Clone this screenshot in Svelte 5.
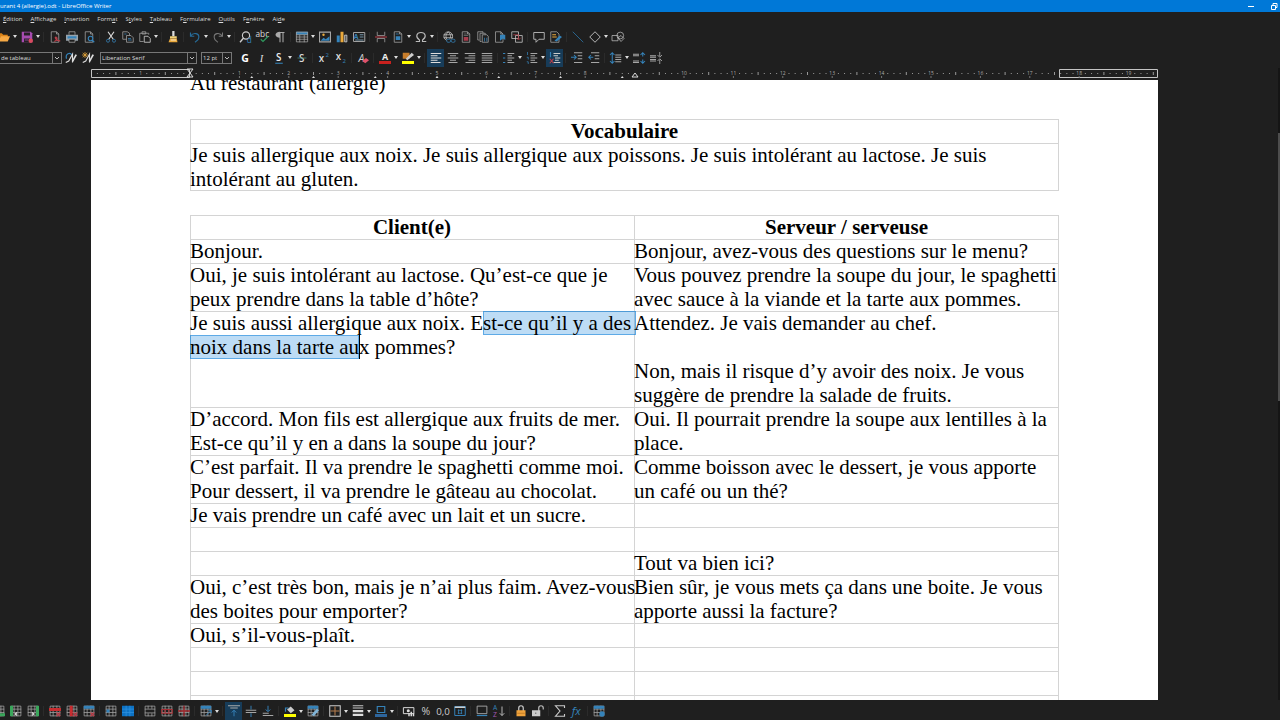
<script lang="ts">
	const menus = [
		['É', 'dition'],
		['A', 'ffichage'],
		['I', 'nsertion'],
		['Forma', 't'],
		['St', 'yles'],
		['T', 'ableau'],
		['Fo', 'rmulaire'],
		['O', 'utils'],
		['Fe', 'nêtre'],
		['Aid', 'e']
	];

	const G = '#a6a6a6';
	const B = '#3583ba';
	const R = '#b93f4a';
	const Y = '#e9a93c';

	const page = `<path d="M3 1h7l3 3v11H3z M10 1v3h3" stroke="${G}"/>`;
	const grid = (h = 15) =>
		`<path d="M1.5 1.5h13v13h-13z M1 5.5h14 M1 10h14 M5.5 1v${h - 1} M10.5 1v${h - 1}" stroke="${G}"/>`;
	const lines = (rows: number[][], c = G) =>
		`<path d="${rows.map(([x, y, w]) => `M${x} ${y}h${w}`).join('')}" stroke="${c}" stroke-width="1.4"/>`;
	const cross = `<path d="M10 10l5 5m0-5l-5 5" stroke="${R}" stroke-width="1.8"/>`;

	const icons: Record<string, string> = {
		Ouvrir: `<path d="M0 3h5l2 2h6v3H4l-3 6H0z" fill="#d98218"/><path d="M4 7h12l-3 7H0z" fill="#f6a945"/>`,
		Enregistrer: `<path d="M1 1h12l2 2v12H1z" fill="#a64bb0"/><path d="M4 2h8v4H4z M4 10h8v5H4z" fill="#262026"/><path d="M5 12h5" stroke="#a64bb0"/><circle cx="13" cy="13" r="3" fill="#d94b60"/>`,
		'Exporter en PDF': page + `<path d="M7 14c5-2 4-6 2-6s1 6 6 5" stroke="${R}" stroke-width="1.6"/>`,
		Imprimer: `<path d="M4 5V1h8v4" stroke="${G}"/><path d="M0 5h16v8H0z" fill="#98a4ac"/><path d="M2 7h12v3H2z" fill="${B}"/><path d="M4 11h8v4H4z" fill="#1f1f1f" stroke="${G}"/>`,
		'Aperçu': page + `<circle cx="10" cy="10" r="3" fill="#1f1f1f" stroke="${B}" stroke-width="1.5"/><path d="M12 12l3 3" stroke="${B}" stroke-width="1.6"/>`,
		Couper: `<path d="M4 1l7 10M12 1L5 11" stroke="#ddd" stroke-width="1.5"/><circle cx="4" cy="13" r="2" stroke="${B}"/><circle cx="12" cy="13" r="2" stroke="${B}"/>`,
		Copier: `<path d="M1 1h6l3 2v8H1z" stroke="${G}"/><path d="M6 6h6l3 3v6H6z" fill="#1f1f1f" stroke="${G}"/><path d="M8 10h4M8 12h5M3 4h3" stroke="${B}"/>`,
		Coller: `<path d="M6 14H1V3h12v2M4 3V1h5v3H4z" stroke="${G}"/><path d="M7 7h5l3 3v5H7z" fill="#1f1f1f" stroke="#ddd"/>`,
		'Cloner le formatage': `<path d="M7 0h3v7H7z" fill="#ddd"/><path d="M4 7h9v3H4z" fill="#f1d27a"/><path d="M4 10h9l1 5H2z" fill="${Y}"/><path d="M5 12h7" stroke="#fff"/>`,
		Annuler: `<path d="M2 2v5h5M2 7c4-6 12-4 11 2 0 3-2 4-5 6" stroke="#276b98" stroke-width="1.6"/>`,
		'Rétablir': `<path d="M14 2v5H9M14 7C10 1 2 3 3 9c0 3 2 4 5 6" stroke="#777" stroke-width="1.4"/>`,
		Rechercher: `<circle cx="8" cy="6" r="4.8" stroke="#ccc" stroke-width="1.5"/><path d="M5 9l-5 6" stroke="#ccc" stroke-width="1.8"/><text x="9" y="16" font-size="11" fill="${B}">d</text>`,
		Orthographe: `<text x="-2" y="8" font-size="11" fill="#ddd">abc</text><path d="M5 11l3 3 7-7" stroke="#2f9a5f" stroke-width="1.6"/>`,
		'Marques de formatage': `<path d="M7 2h7M8 2v13M12 2v13" stroke="#aaa" stroke-width="1.4"/><path d="M8 1C0 1 0 9 8 9z" fill="#aaa"/>`,
		'Insérer un tableau': `<path d="M0 1h16v4H0z" fill="${B}"/><path d="M.5 1.5h15v13H.5z M0 5h16M0 8h16M0 11h16M5 5v10M11 5v10" stroke="${G}"/>`,
		'Insérer une image': `<path d="M.7 1.5h14.6v13H.7z" stroke="${G}" stroke-width="1.4"/><path d="M2 13l4-4 3 2 5-4v6z" fill="${B}"/><circle cx="6" cy="5" r="1.6" fill="${Y}"/>`,
		Diagramme: `<path d="M1 6h4v9H1z" fill="${B}"/><path d="M6 1h4v14H6z" fill="${Y}"/><path d="M11.5 5.5h3v9h-3z" stroke="#ddd" fill="#555"/>`,
		'Zone de texte': `<path d="M.7 2h15v12H.7z" stroke="${G}" stroke-width="1.3"/><text x="1" y="11" font-size="9" font-weight="700" fill="${B}">A</text><path d="M9 5h5M9 8h5M3 12h11" stroke="#8db9d6"/>`,
		'Saut de page': `<path d="M3 1v5h10V1M3 15v-5h10v5" stroke="${G}"/><path d="M0 8h16" stroke="${R}" stroke-width="1.4"/>`,
		Champ: page + `<path d="M5 7h6v5H5z" fill="${B}"/><path d="M5 4h4" stroke="${B}"/>`,
		'Caractères spéciaux': `<path d="M1 14h5v-2C0 8 2 2 8 2s8 6 2 10v2h5" stroke="#bbb" stroke-width="1.5"/>`,
		'Hyperlien': `<circle cx="7" cy="7" r="5.8" stroke="#ccc"/><path d="M1 5h12M1 9h12M7 1c-5 5-3 9 0 12M7 1c5 5 3 9 0 12" stroke="#ccc"/><path d="M5 13h9" stroke="#1f1f1f" stroke-width="5"/><rect x="5" y="11" width="5" height="4" rx="1.5" stroke="${B}"/><rect x="11" y="11" width="5" height="4" rx="1.5" stroke="${B}"/>`,
		'Note de bas de page': page + `<path d="M5 8h6v5H5z" fill="#a83d4d"/><path d="M5 4h4M5 6h6" stroke="#777"/>`,
		'Note de fin': `<path d="M3 12H1V1h7v2M6 14H4V3h7v2" stroke="${G}"/><path d="M7 5h6l2 2v8H7z" fill="#1f1f1f" stroke="${G}"/><path d="M10 9v5M13 9v5" stroke="${B}"/>`,
		'Repère de texte': `<path d="M2 1h7l3 3v11H2z M9 1v3h3" stroke="${G}"/><path d="M8 5h7v7l-3-2-4 3z" fill="${B}"/>`,
		'Renvoi': `<path d="M1 1h9v9H1z M6 6h9v9H6z" stroke="#ccc"/><path d="M3 5h7v6M7 9l3 3 3-3" stroke="${R}"/>`,
		Commentaire: `<path d="M1 2h14v9H8l-4 4v-4H1z" stroke="#bbb" stroke-width="1.2"/>`,
		'Suivi des modifications': `<path d="M1 1h8l3 3v11H1z" stroke="${G}"/><path d="M3 5h5M3 8h6" stroke="${Y}" stroke-width="1.5"/><path d="M6 13l7-7 3 2-7 6z" fill="${B}"/>`,
		Ligne: `<path d="M1 1l14 14" stroke="#2a668f" stroke-width="1.3"/>`,
		Formes: `<path d="M8 1l7 7-7 7-7-7z" stroke="#bbb" stroke-width="1.3"/>`,
		'Fonctions de dessin': `<circle cx="11" cy="6" r="4.5" stroke="#bbb"/><path d="M0 6h8v7H0z M8 9l4 5 4-4-4-4z" stroke="#bbb"/>`,

		'Actualiser le style': `<path d="M2 9C0 2 7 0 9 4" stroke="${B}" stroke-width="1.6"/><path d="M1 14l4-2 5-9v11" stroke="#ddd" stroke-width="1.5"/><path d="M9 12l5-9 2 1-5 9z" fill="#ddd"/>`,
		'Nouveau style': `<path d="M4 0v8M0 4h8M1 1l6 6M7 1L1 7" stroke="${Y}"/><path d="M1 14l4-2 5-9v11" stroke="#ddd" stroke-width="1.5"/><path d="M9 12l5-9 2 1-5 9z" fill="#ddd"/>`,
		Gras: `<text x="3" y="13" font-size="14" font-weight="700" fill="#fff">G</text>`,
		Italique: `<text x="5" y="13" font-size="14" font-style="italic" font-family="Liberation Serif, serif" fill="#ddd">I</text>`,
		Souligner: `<text x="4" y="12" font-size="13" font-weight="600" fill="#eee">S</text><path d="M3 15h10" stroke="${B}" stroke-width="1.4"/>`,
		Barrer: `<text x="4" y="13" font-size="13" font-weight="600" fill="#ddd">S</text><path d="M2 8h12" stroke="#43806f" stroke-width="1.2"/>`,
		Exposant: `<text x="1" y="13" font-size="13" font-weight="600" fill="#ddd">x</text><text x="10" y="7" font-size="8" fill="${B}">2</text>`,
		Indice: `<text x="1" y="11" font-size="13" font-weight="600" fill="#ddd">x</text><text x="10" y="15" font-size="8" fill="${B}">2</text>`,
		'Effacer le formatage': `<text x="2" y="13" font-size="14" font-style="italic" fill="#ccc">A</text><path d="M7 12l5-4 4 3-5 4z" fill="#e0526a"/>`,
		'Couleur de police': `<text x="4" y="10" font-size="12" font-weight="700" fill="#eee">A</text><path d="M0 12h16v4H0z" fill="#c9211e"/>`,
		Surlignage: `<path d="M1 1h9v8H1z" fill="#c77d2b"/><path d="M5 9l8-8 3 3-9 7z" fill="#ccc"/><path d="M0 12h16v4H0z" fill="#ffff00"/>`,
		'Aligner à gauche': lines([[1, 2, 14], [1, 5, 9], [1, 8, 14], [1, 11, 9], [1, 14, 13]], '#ddd'),
		Centrer: lines([[1, 2, 14], [4, 5, 8], [1, 8, 14], [4, 11, 8], [2, 14, 12]]),
		'Aligner à droite': lines([[1, 2, 14], [6, 5, 9], [1, 8, 14], [6, 11, 9], [2, 14, 13]]),
		Justifier: lines([[1, 2, 14], [1, 5, 14], [1, 8, 14], [1, 11, 14], [1, 14, 14]]),
		Puces: lines([[6, 2, 9], [6, 5, 6], [6, 8, 9], [6, 11, 6], [6, 14, 9]]) + lines([[0, 2, 3], [0, 8, 3], [0, 14, 3]], B),
		'Numérotation': lines([[6, 2, 9], [6, 5, 6], [6, 8, 9], [6, 11, 6], [6, 14, 9]]) + `<path d="M2 0v4M1 7h2v3M1 13h2v3" stroke="${B}"/>`,
		Plan: lines([[6, 2, 9], [6, 5, 6], [8, 8, 7], [8, 11, 5], [6, 14, 9]], '#ccc') + `<path d="M2 0v7" stroke="${B}" stroke-width="1.5"/><path d="M1 9l5 6m0-6l-5 6" stroke="${R}" stroke-width="1.5"/>`,
		'Augmenter le retrait': lines([[4, 1, 11], [9, 5, 6], [9, 9, 6], [4, 14, 11]]) + `<path d="M0 7h6M4 4l3 3-3 3" stroke="${B}" stroke-width="1.4"/>`,
		'Diminuer le retrait': lines([[4, 1, 11], [9, 5, 6], [9, 9, 6], [4, 14, 11]]) + `<path d="M1 7h6M4 4L1 7l3 3" stroke="${B}" stroke-width="1.4"/>`,
		Interligne: lines([[7, 4, 8], [7, 7, 8], [7, 10, 8], [7, 13, 8]]) + `<path d="M3 1v14M0 4l3-3 3 3M0 12l3 3 3-3" stroke="${B}" stroke-width="1.4"/>`,
		"Augmenter l'espacement": lines([[0, 3, 8], [0, 5, 8], [0, 12, 8], [0, 14, 8]]) + `<path d="M13 1v5M13 10v5M10 4l3-3 3 3M10 12l3 3 3-3" stroke="${B}" stroke-width="1.4"/>`,
		"Diminuer l'espacement": lines([[0, 5, 8], [0, 7, 8], [0, 10, 8], [0, 12, 8]]) + `<path d="M13 0v6M13 10v6M10 4l3 3 3-3M10 12l3-3 3 3" stroke="${G}" stroke-width="1.2"/>`,

		'Lignes au-dessous': grid() + `<path d="M0 11h16v4H0z" fill="#3aa65b"/>`,
		'Colonnes avant': grid() + `<path d="M0 1h4v14H0z" fill="#3aa65b"/><path d="M6 12l3-3v6z" fill="#eee"/>`,
		'Colonnes après': grid() + `<path d="M12 1h4v14h-4z" fill="#3aa65b"/><path d="M10 12l-3-3v6z" fill="#eee"/>`,
		'Supprimer les lignes': grid() + `<path d="M0 4h16v4H0z" fill="#c92d30"/>` + cross,
		'Supprimer les colonnes': grid() + `<path d="M5 1h4v14H5z" fill="#c92d30"/>` + cross,
		'Supprimer le tableau': grid() + `<path d="M1 1h14v4H1z" fill="${B}"/>` + cross,
		'Sélectionner la cellule': grid() + `<path d="M2 6h4v4H2z" fill="${B}"/>`,
		'Sélectionner le tableau': `<path d="M0 1h16v14H0z" fill="#0d72c4"/><path d="M5.5 1v14M10.5 1v14M0 5.5h16M0 10h16" stroke="#2d91df"/>`,
		Fusionner: `<path d="M1.5 1.5h13v13h-13z M1 5.5h14M1 10.5h14M5.5 1v4M10.5 1v4M5.5 11v4M10.5 11v4" stroke="${G}"/>`,
		Fractionner: grid() + `<path d="M1 6h14v5H1z M5.5 6v5M10.5 6v5" stroke="#a92f35" stroke-width="1.4"/>`,
		'Fractionner le tableau': grid() + `<path d="M0 8h16M8 1v14" stroke="#a92f35" stroke-width="1.8"/>`,
		'Optimiser la taille': grid() + `<path d="M1 1h14v4H1z" fill="${B}"/><path d="M8 14l7-7M15 11v-4h-4" stroke="${B}" stroke-width="1.3"/>`,
		'Aligner en haut': lines([[0, 1, 16], [3, 4, 10]], '#aaa') + `<path d="M8 15V7M5 10l3-3 3 3" stroke="${B}" stroke-width="1.3"/>`,
		'Centrer verticalement': lines([[1, 7, 14], [1, 10, 14]]) + `<path d="M8 1v5M8 16v-5" stroke="${B}" stroke-width="1.3"/>`,
		'Aligner en bas': lines([[1, 11, 8], [1, 14, 14]]) + `<path d="M8 1v7M5 6l3 3 3-3" stroke="${B}" stroke-width="1.3"/>`,
		'Arrière-plan': `<path d="M4 6l5-4 5 5-5 4z" fill="#ccc"/><path d="M2 9V4h4" stroke="${B}" stroke-width="1.6"/><path d="M0 12h16v4H0z" fill="#ffff00"/>`,
		AutoFormat: grid() + `<path d="M1 1h14v4H1z" fill="${B}"/><path d="M6 13l7-8 3 2-7 8z" fill="#7fb4d8"/>`,
		Bordures: `<path d="M1 1h14v14H1z" stroke="#ccc" stroke-width="1.4"/><path d="M8 2v12M2 8h12" stroke="#b37c4c" stroke-width="1.4"/>`,
		'Style de bordure': `<path d="M1 1h14M1 4h14" stroke="#ccc" stroke-width="1.3"/><path d="M1 8h14M1 13h14" stroke="#ddd" stroke-width="3"/>`,
		'Couleur de bordure': `<path d="M3 2h10v8H3z" stroke="${B}" stroke-width="1.5"/><path d="M0 12h16v4H0z" fill="#2d659c"/>`,
		'Monétaire': `<path d="M.5 3.5h14v8H.5z" stroke="#ddd" stroke-width="1.3"/><circle cx="7" cy="7.5" r="2" fill="#ddd"/><path d="M8 11v4M11 9v6M14 11v4" stroke="#ddd" stroke-width="2"/>`,
		Pourcentage: `<text x="2" y="13" font-size="14" fill="#ccc">%</text>`,
		'Décimal': `<text x="-1" y="13" font-size="13" fill="#ccc">0,0</text>`,
		Date: `<path d="M1 2h14v12H1z" stroke="${B}" stroke-width="1.3"/><path d="M1 3h14" stroke="#ccc" stroke-width="2"/><path d="M5 7h6M5 11h6M6 6v6M10 6v6" stroke="${B}"/>`,
		'Légende': `<path d="M1.5 1.5h13v10h-13z" stroke="#aaa" stroke-width="1.2"/><path d="M1 14h14" stroke="${B}" stroke-width="1.6"/>`,
		Trier: `<text x="0" y="7" font-size="9" fill="${B}">A</text><text x="0" y="16" font-size="9" fill="#a359b5">Z</text><path d="M12 2v12M9 11l3 3 3-3" stroke="#bbb" stroke-width="1.3"/>`,
		'Protéger': `<path d="M5 8V4c0-4 6-4 6 0v4" stroke="#ccc" stroke-width="1.6"/><path d="M2 7h12v8H2z" fill="#f0a33b"/><path d="M3 11h10" stroke="#b97422"/>`,
		'Déprotéger': `<path d="M9 8V4c0-4 6-4 6 0v2" stroke="#bbb" stroke-width="1.6"/><path d="M0 7h11v8H0z" fill="#ccc"/><path d="M5 10v2" stroke="#444"/>`,
		Somme: `<path d="M14 4V1H2l6 7-6 7h12v-3" stroke="#ccc" stroke-width="1.5"/>`,
		Formule: `<text x="1" y="13" font-size="15" font-style="italic" fill="${B}">fx</text>`,
		'Propriétés du tableau': grid() + `<path d="M1 1h14v4H1z" fill="${B}"/><circle cx="12" cy="12" r="3.6" fill="${B}"/>`
	};

	const standard =
		'Ouvrir v Enregistrer v | Exporter_en_PDF Imprimer Aperçu | Couper Copier Coller v | Cloner_le_formatage | Annuler v Rétablir v | Rechercher Orthographe Marques_de_formatage | Insérer_un_tableau v Insérer_une_image Diagramme Zone_de_texte | Saut_de_page Champ v Caractères_spéciaux v | Hyperlien Note_de_bas_de_page Note_de_fin Repère_de_texte Renvoi | Commentaire Suivi_des_modifications | Ligne Formes v Fonctions_de_dessin';
	const styleTools = 'Actualiser_le_style Nouveau_style';
	const formatting =
		"Gras Italique Souligner v Barrer | Exposant Indice | Effacer_le_formatage | Couleur_de_police v Surlignage v | Aligner_à_gauche Centrer Aligner_à_droite Justifier | Puces v Numérotation v Plan | Augmenter_le_retrait Diminuer_le_retrait | Interligne v Augmenter_l'espacement Diminuer_l'espacement";
	const tableTools =
		'Lignes_au-dessous Colonnes_avant Colonnes_après | Supprimer_les_lignes Supprimer_les_colonnes Supprimer_le_tableau | Sélectionner_la_cellule Sélectionner_le_tableau | Fusionner Fractionner Fractionner_le_tableau | Optimiser_la_taille v | Aligner_en_haut Centrer_verticalement Aligner_en_bas | Arrière-plan v AutoFormat | Bordures v Style_de_bordure v Couleur_de_bordure v | Monétaire Pourcentage Décimal Date | Légende Trier | Protéger Déprotéger | Somme Formule | Propriétés_du_tableau';

	const active = ['Aligner à gauche', 'Plan', 'Aligner en haut'];

	// one entry per table row, each cell is a list of lines
	const dialogue = [
		[['Bonjour.'], ['Bonjour, avez-vous des questions sur le menu?']],
		[
			['Oui, je suis intolérant au lactose. Qu’est-ce que je', 'peux prendre dans la table d’hôte?'],
			['Vous pouvez prendre la soupe du jour, le spaghetti', 'avec sauce à la viande et la tarte aux pommes.']
		],
		[
			['Je suis aussi allergique aux noix. E[st-ce qu’il y a des ]', '[noix dans la tarte au]x pommes?'],
			['Attendez. Je vais demander au chef.', '', 'Non, mais il risque d’y avoir des noix. Je vous', 'suggère de prendre la salade de fruits.']
		],
		[
			['D’accord. Mon fils est allergique aux fruits de mer.', 'Est-ce qu’il y en a dans la soupe du jour?'],
			['Oui. Il pourrait prendre la soupe aux lentilles à la', 'place.']
		],
		[
			['C’est parfait. Il va prendre le spaghetti comme moi.', 'Pour dessert, il va prendre le gâteau au chocolat.'],
			['Comme boisson avec le dessert, je vous apporte', 'un café ou un thé?']
		],
		[['Je vais prendre un café avec un lait et un sucre.'], ['']],
		[[''], ['']],
		[[''], ['Tout va bien ici?']],
		[
			['Oui, c’est très bon, mais je n’ai plus faim. Avez-vous', 'des boites pour emporter?'],
			['Bien sûr, je vous mets ça dans une boite. Je vous', 'apporte aussi la facture?']
		],
		[['Oui, s’il-vous-plaît.'], ['']],
		[[''], ['']],
		[[''], ['']],
		[[''], ['']]
	];

	const CM = 49.4;
	const dots = Array.from({ length: 173 }, (_, i) => i - 15)
		.map((i) => ({ i, x: 99 + (i * CM) / 8 }))
		.filter((d) => d.i % 8 !== 0 && d.x < 1064);
	const numbers = Array.from({ length: 20 }, (_, i) => i).filter((n) => n > 0);
	const tabs = Array.from({ length: 7 }, (_, i) => 99 + (i + 1) * CM * 1.25);
</script>

{#snippet tools(list: string)}
	{#each list.split(' ') as item}
		{@const name = item.replaceAll('_', ' ')}
		{#if item === '|'}
			<span class="sep"></span>
		{:else if item === 'v'}
			<button class="more" aria-label="Options">
				<svg viewBox="0 0 4 3"><path d="M0 0h4L2 3z" fill="#ddd" /></svg>
			</button>
		{:else}
			<button class="tool" class:active={active.includes(name)} aria-label={name}>
				<svg viewBox="0 0 16 16" fill="none">{@html icons[name]}</svg>
			</button>
		{/if}
	{/each}
{/snippet}

{#snippet combo(label: string, value: string, kind: string)}
	<label class="combo {kind}">
		<select aria-label={label}><option>{value}</option></select>
		<svg viewBox="0 0 10 12" fill="none"><path d="M.5 0v12" stroke="#777" /><path d="M3 5l2 2 2-2" stroke="#bbb" /></svg>
	</label>
{/snippet}

{#snippet line(text: string)}
	<p>
		{#each text.split(/(\[.*\])/) as part}{#if part.startsWith('[')}<mark class:caret={!part.endsWith(' ]')}>{part.slice(1, -1)}</mark>{:else}{part}{/if}{/each}
	</p>
{/snippet}

<div class="window">
	<header class="title">
		<span>urant 4 (allergie).odt - LibreOffice Writer</span>
		<div class="controls">
			<button aria-label="Réduire"><svg viewBox="0 0 8 8" fill="none"><path d="M1 4.5h6" stroke="#fff" /></svg></button>
			<button aria-label="Restaurer"><svg viewBox="0 0 8 8" fill="none"><path d="M1.5 3.5h4v4h-4z M3 3V1.5h4v4H6" stroke="#fff" /></svg></button>
		</div>
	</header>

	<nav class="menu">
		{#each menus as [a, b]}
			<button>{#if a.length > 1}{a.slice(0, -1)}{/if}<u>{a.at(-1)}</u>{b}</button>
		{/each}
	</nav>

	<div class="toolbar">{@render tools(standard)}</div>
	<div class="toolbar">
		{@render combo('Style de paragraphe', 'de tableau', 'style')}
		{@render tools(styleTools)}
		{@render combo('Police', 'Liberation Serif', 'font')}
		{@render combo('Taille', '12 pt', 'size')}
		{@render tools(formatting)}
	</div>

	<div class="workspace">
		<div class="editor">
			<svg class="ruler" viewBox="0 0 1067 12" fill="none">
				<path d="M.5 1.5h98v8H.5z M968.5 1.5h98v8h-98z" stroke="#c4c4c4" />
				{#each dots as d}
					<rect x={d.x - 0.5} y={d.i % 4 === 0 ? 4 : 5} width="1" height={d.i % 4 === 0 ? 3 : 1} fill="#999" />
				{/each}
				<text x={99 - CM} y="7">1</text>
				{#each numbers as n}
					{#if n !== 9}
						<text x={99 + n * CM} y="7">{n}</text>
						<path d="M{99 + n * CM} 8v2" stroke="#777" />
					{/if}
				{/each}
				{#each tabs as x}
					<path d="M{x - 1.5} 10h3l-1.5-2z" fill="#ddd" />
				{/each}
				<path d="M96 1h6l-6 8h6l-6-8M541 9l3-4 3 4z" stroke="#ddd" />
			</svg>

			<main class="page">
				<article>
					<p>Au restaurant (allergie)</p>
					<table>
						<thead><tr><th>Vocabulaire</th></tr></thead>
						<tbody>
							<tr>
								<td>
									{@render line('Je suis allergique aux noix. Je suis allergique aux poissons. Je suis intolérant au lactose. Je suis')}
									{@render line('intolérant au gluten.')}
								</td>
							</tr>
						</tbody>
					</table>
					<table class="dialogue">
						<thead><tr><th>Client(e)</th><th>Serveur / serveuse</th></tr></thead>
						<tbody>
							{#each dialogue as row}
								<tr>
									{#each row as cell}
										<td>{#each cell as text}{@render line(text)}{/each}</td>
									{/each}
								</tr>
							{/each}
						</tbody>
					</table>
				</article>
			</main>
		</div>
		<div class="scrollbar"><div class="thumb"></div></div>
	</div>

	<div class="toolbar bottom">{@render tools(tableTools)}</div>
</div>

<style>
	:global(body) {
		background: #1f1f1f;
	}

	.window {
		display: flex;
		flex-direction: column;
		height: 100vh;
		overflow: hidden;
		background: #1f1f1f;
		color: #ddd;
		font: 6px/12px 'Open Sans', 'Noto Sans', sans-serif;
	}

	button {
		margin: 0;
		padding: 0;
		border: 0;
		background: none;
		color: inherit;
		font: inherit;
	}

	svg {
		display: block;
	}

	.title {
		display: flex;
		justify-content: space-between;
		height: 12px;
		flex: none;
		background: #0078d7;
		color: #fff;
	}

	.controls {
		display: flex;
		align-items: center;
		gap: 15px;
		padding-right: 2px;
	}

	.controls svg {
		width: 8px;
		height: 8px;
	}

	.menu {
		display: flex;
		flex: none;
		gap: 8px;
		height: 14px;
		padding-left: 3px;
	}

	.menu u {
		text-underline-offset: 1px;
	}

	.toolbar {
		display: flex;
		align-items: center;
		flex: none;
		height: 21px;
		margin-left: -5px;
	}

	.toolbar.bottom {
		height: 18px;
		margin-left: -10px;
		padding-top: 2px;
	}

	.tool {
		display: grid;
		place-items: center;
		flex: none;
		width: 17px;
		height: 18px;
	}

	.tool.active {
		background: #173c59;
	}

	.tool svg {
		width: 12px;
		height: 12px;
		overflow: visible;
	}

	.more {
		display: grid;
		place-items: center;
		flex: none;
		width: 6px;
		height: 18px;
	}

	.more svg {
		width: 4px;
		height: 3px;
	}

	.sep {
		flex: none;
		width: 1px;
		height: 10px;
		margin: 0 2px;
		background: #2b2b2b;
	}

	.combo {
		position: relative;
		flex: none;
		height: 12px;
	}

	.combo select {
		appearance: none;
		display: block;
		box-sizing: border-box;
		width: 100%;
		height: 12px;
		padding: 0 1px;
		border: 1px solid #777;
		border-radius: 0;
		background: #1f1f1f;
		color: #ddd;
		font: inherit;
		line-height: 10px;
	}

	.combo svg {
		position: absolute;
		top: 0;
		right: 0;
		width: 10px;
		height: 12px;
		pointer-events: none;
	}

	.combo.style {
		width: 67px;
	}

	.combo.style select {
		padding-left: 5px;
	}

	.combo.font {
		width: 97px;
		margin-left: 4px;
	}

	.combo.size {
		width: 31px;
		margin: 0 4px;
	}

	.workspace {
		display: flex;
		flex: 1;
		min-height: 0;
	}

	.editor {
		display: flex;
		flex-direction: column;
		flex: 1;
		min-width: 0;
		padding: 0 120px 0 91px;
	}

	.ruler {
		flex: none;
		width: 100%;
		overflow: visible;
	}

	.ruler text {
		fill: #aaa;
		font-size: 5px;
		text-anchor: middle;
	}

	.page {
		flex: 1;
		min-height: 0;
		overflow: hidden;
		background: #fff;
		color: #000;
		font: 21px/24px 'Liberation Serif', 'Times New Roman', serif;
	}

	article {
		margin-top: -9px;
		padding: 0 99px;
	}

	p {
		min-height: 24px;
		margin: 0;
		white-space: nowrap;
	}

	table {
		width: 100%;
		margin-top: 24px;
		border-spacing: 0;
		table-layout: fixed;
		box-shadow: inset -1px -1px #d4d4d4;
	}

	th,
	td {
		padding: 0;
		vertical-align: top;
		text-align: left;
		box-shadow: inset 1px 1px #d4d4d4;
	}

	th {
		text-align: center;
	}

	.dialogue th:first-child {
		width: 444px;
	}

	mark {
		padding: 0;
		background: rgb(0 120 215 / 26%);
		box-shadow: inset 0 0 0 1px rgb(0 120 215 / 50%);
		color: inherit;
		white-space: pre;
	}

	.caret {
		border-right: 1px solid #000;
		margin-right: -1px;
	}

	.scrollbar {
		width: 2px;
		padding-top: 65px;
		background: #151515;
	}

	.thumb {
		height: 268px;
		background: #4d4d4d;
	}
</style>
